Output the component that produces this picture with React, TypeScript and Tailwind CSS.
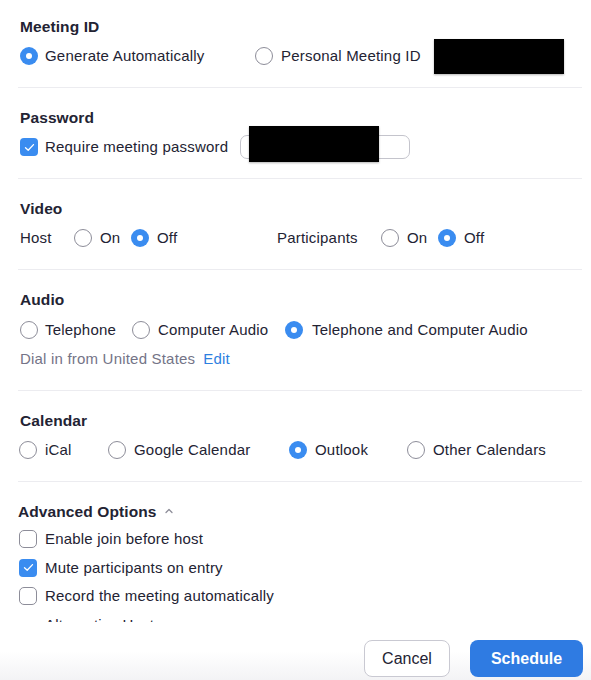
import React from "react";

const Radio = ({ checked }: { checked?: boolean }) =>
  checked ? (
    <span className="flex h-[18px] w-[18px] shrink-0 items-center justify-center rounded-full bg-[#3a8cf0]">
      <span className="h-[6px] w-[6px] rounded-full bg-white" />
    </span>
  ) : (
    <span className="h-[18px] w-[18px] shrink-0 rounded-full border border-[#8d8d99] bg-white" />
  );

const Check = ({ checked }: { checked?: boolean }) =>
  checked ? (
    <span className="flex h-[18px] w-[18px] shrink-0 items-center justify-center rounded-[4px] bg-[#3a8cf0]">
      <svg width="11" height="9" viewBox="0 0 11 9" fill="none">
        <polyline points="1.5,4.8 4.2,7.3 9.5,1.6" stroke="white" strokeWidth="1.3" strokeLinecap="round" strokeLinejoin="round" />
      </svg>
    </span>
  ) : (
    <span className="h-[18px] w-[18px] shrink-0 rounded-[5px] border border-[#8d8d99] bg-white" />
  );

const Opt = ({ checked, label, w, gap = "gap-[7px]" }: { checked?: boolean; label: string; w?: string; gap?: string }) => (
  <div className={`flex items-center ${gap} ${w ?? ""}`}>
    <Radio checked={checked} />
    <span>{label}</span>
  </div>
);

const Section = ({
  title,
  children,
  first,
  mt = "mt-[5px]",
  pb = "pb-[17px]",
}: {
  title: string;
  children: React.ReactNode;
  first?: boolean;
  mt?: string;
  pb?: string;
}) => (
  <div className={`ml-[18px] mr-[9px] ${first ? "pt-[17px]" : "pt-[20px]"} border-b border-[#ececf0] ${pb}`}>
    <div className="pl-[2px] text-[15.5px] font-bold leading-[20px] tracking-[0.1px] text-[#232333]">{title}</div>
    <div className={`${mt} pl-[2px]`}>{children}</div>
  </div>
);

export default function App() {
  return (
    <div
      className="flex h-[680px] w-[591px] flex-col bg-white text-[15px] tracking-[0.2px] text-[#232333]"
      style={{ fontFamily: '"Liberation Sans", Arial, sans-serif' }}
    >
      <div className="h-[622px] overflow-hidden">
        <Section title="Meeting ID" first>
          <div className="flex h-[28px] items-center">
            <Opt checked label="Generate Automatically" w="w-[235px]" />
            <Opt label="Personal Meeting ID" gap="gap-[8px]" />
            <div className="ml-[13px] h-[35px] w-[130px] bg-black shadow-[0_1px_2px_rgba(0,0,0,0.3)]" />
          </div>
        </Section>

        <Section title="Password">
          <div className="flex h-[28px] items-center">
            <div className="flex w-[220px] items-center gap-[7px]">
              <Check checked />
              <span>Require meeting password</span>
            </div>
            <div className="relative h-[24px] w-[170px] rounded-[7px] border border-[#c4c4cc] bg-white">
              <div className="absolute left-[8px] top-[-10px] h-[36px] w-[130px] bg-black shadow-[0_1px_2px_rgba(0,0,0,0.3)]" />
            </div>
          </div>
        </Section>

        <Section title="Video">
          <div className="flex h-[28px] items-center">
            <div className="flex w-[257px] items-center">
              <span className="w-[54px]">Host</span>
              <Opt label="On" w="w-[57px]" gap="gap-[8px]" />
              <Opt checked label="Off" gap="gap-[8px]" />
            </div>
            <div className="flex items-center">
              <span className="w-[104px]">Participants</span>
              <Opt label="On" w="w-[57px]" gap="gap-[8px]" />
              <Opt checked label="Off" gap="gap-[8px]" />
            </div>
          </div>
        </Section>

        <Section title="Audio" mt="mt-[6px]" pb="pb-[17px]">
          <div className="flex h-[28px] items-center">
            <Opt label="Telephone" w="w-[112px]" />
            <Opt label="Computer Audio" w="w-[153px]" gap="gap-[8px]" />
            <Opt checked label="Telephone and Computer Audio" gap="gap-[9px]" />
          </div>
          <div className="mt-[1px] flex h-[28px] items-center gap-[8px]">
            <span className="text-[#747487]">Dial in from United States</span>
            <span className="text-[#2d7fe0]">Edit</span>
          </div>
        </Section>

        <Section title="Calendar">
          <div className="-ml-[1px] flex h-[28px] items-center">
            <Opt label="iCal" w="w-[89px]" gap="gap-[8px]" />
            <Opt label="Google Calendar" w="w-[181px]" gap="gap-[8px]" />
            <Opt checked label="Outlook" w="w-[118px]" gap="gap-[8px]" />
            <Opt label="Other Calendars" gap="gap-[8px]" />
          </div>
        </Section>

        <div className="ml-[18px] mr-[9px] pt-[20px]">
          <div className="flex items-center gap-[8px] text-[15.5px] font-bold leading-[20px] tracking-[0.1px]">
            <span>Advanced Options</span>
            <svg width="8" height="6" viewBox="0 0 8 6" fill="none" className="mt-[-3px]">
              <polyline points="1,4.5 4,1.5 7,4.5" stroke="#8d8d99" strokeWidth="1.3" strokeLinecap="round" strokeLinejoin="round" />
            </svg>
          </div>
          <div className="mt-[3px] pl-[1px]">
            {[
              { l: "Enable join before host", c: false },
              { l: "Mute participants on entry", c: true },
              { l: "Record the meeting automatically", c: false },
              { l: "Alternative Hosts", c: false, hidden: true },
            ].map((r) => (
              <div key={r.l} className="flex h-[28.5px] items-center gap-[8px]">
                {r.hidden ? <span className="w-[18px]" /> : <Check checked={r.c} />}
                <span>{r.l}</span>
              </div>
            ))}
          </div>
        </div>
      </div>

      <div className="flex flex-1 items-start justify-end gap-[20px] bg-linear-to-b from-white from-50% to-[#f3f3f5] pr-[8px] pt-[18px]">
        <button className="h-[37px] w-[86px] rounded-[8px] border border-[#c9c9d2] bg-white text-[16px] tracking-normal text-[#232333]">
          Cancel
        </button>
        <button className="h-[37px] w-[113px] rounded-[8px] bg-[#2f7be2] text-[16px] font-bold tracking-normal text-white">
          Schedule
        </button>
      </div>
    </div>
  );
}
